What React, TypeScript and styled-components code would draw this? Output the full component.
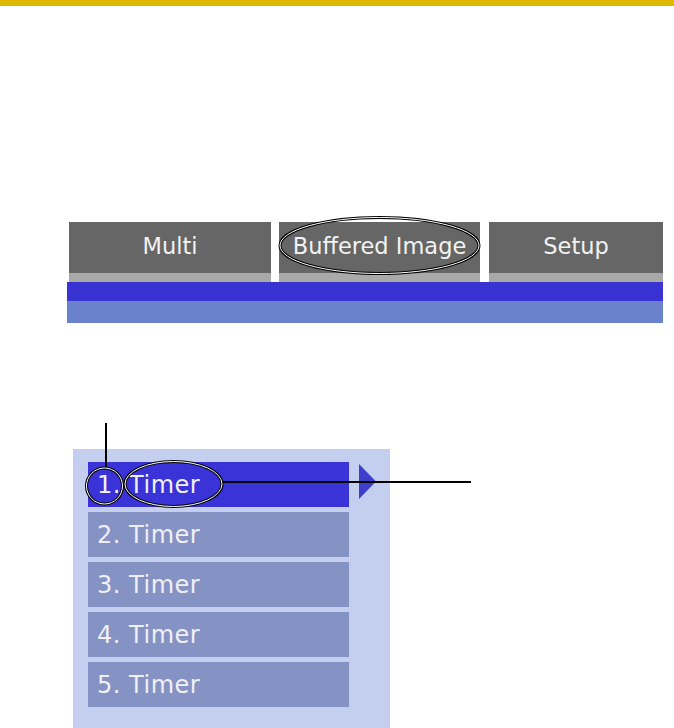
import React from 'react'
import styled, { createGlobalStyle } from 'styled-components'

const GlobalStyle = createGlobalStyle`
  html, body {
    margin: 0;
    padding: 0;
    background: #ffffff;
    font-family: "DejaVu Sans", Verdana, sans-serif;
  }
`

const tabs = [
  { label: 'Multi', width: 202, circled: false },
  { label: 'Buffered Image', width: 201, circled: true },
  { label: 'Setup', width: 174, circled: false },
]

const timers = [1, 2, 3, 4, 5]

const App: React.FC = () => {
  return (
    <Page>
      <GlobalStyle />
      <TopRule />
      <TabSection>
        <TabRow>
          {tabs.map((t) => (
            <Tab key={t.label} $width={t.width}>
              <TabLabel>{t.label}</TabLabel>
              {t.circled && (
                <Callout viewBox="0 0 201 60" width={201} height={60}>
                  <ellipse cx="100.5" cy="23.5" rx="99.5" ry="28" fill="none" stroke="#000" strokeWidth="3" />
                  <ellipse cx="100.5" cy="23.5" rx="99.5" ry="28" fill="none" stroke="#fff" strokeWidth="1" />
                </Callout>
              )}
            </Tab>
          ))}
        </TabRow>
        <BlueBar />
        <LightBar />
      </TabSection>

      <MenuSection>
        <Panel>
          {timers.map((n) => (
            <ItemRow key={n}>
              <Item $active={n === 1}>{n}. Timer</Item>
              {n === 1 && (
                <Arrow viewBox="0 0 17 35" width={17} height={35}>
                  <polygon points="0,0 17,17.5 0,35" fill="#3d3fcb" />
                </Arrow>
              )}
            </ItemRow>
          ))}
        </Panel>
        <Annotations viewBox="0 323 674 405" width={674} height={405}>
          <line x1="106" y1="423" x2="106" y2="469" stroke="#000" strokeWidth="2" />
          <line x1="222" y1="482" x2="471" y2="482" stroke="#000" strokeWidth="2" />
          <ellipse cx="104.5" cy="486" rx="18" ry="18" fill="none" stroke="#000" strokeWidth="3" />
          <ellipse cx="104.5" cy="486" rx="18" ry="18" fill="none" stroke="#fff" strokeWidth="1" />
          <ellipse cx="173.5" cy="484" rx="48.5" ry="22.5" fill="none" stroke="#000" strokeWidth="3" />
          <ellipse cx="173.5" cy="484" rx="48.5" ry="22.5" fill="none" stroke="#fff" strokeWidth="1" />
        </Annotations>
      </MenuSection>
    </Page>
  )
}

export default App

const Page = styled.div`
  width: 674px;
  height: 728px;
  overflow: hidden;
  background: #ffffff;
`

const TopRule = styled.div`
  height: 6px;
  background: #dfb600;
`

const TabSection = styled.div`
  margin: 216px 0 0 67px;
  width: 596px;
`

const TabRow = styled.div`
  display: flex;
  gap: 8px;
  padding-left: 2px;
`

const Tab = styled.div<{ $width: number }>`
  position: relative;
  width: ${(p) => p.$width}px;
  height: 51px;
  background: #666666;
  border-bottom: 9px solid #a9a9a9;
  display: flex;
  align-items: center;
  justify-content: center;
  &:last-child {
    margin-left: 1px;
  }
`

const TabLabel = styled.span`
  color: #f2f2f2;
  font-size: 22.5px;
  line-height: 1;
  margin-top: -3px;
`

const Callout = styled.svg`
  position: absolute;
  left: 0;
  top: 0;
  overflow: visible;
`

const BlueBar = styled.div`
  height: 19px;
  background: #3a33d3;
`

const LightBar = styled.div`
  height: 22px;
  background: #6a82cc;
`

const MenuSection = styled.div`
  position: relative;
  height: 405px;
  padding: 126px 0 0 73px;
  box-sizing: border-box;
`

const Panel = styled.div`
  width: 317px;
  height: 279px;
  box-sizing: border-box;
  background: #c4ceee;
  padding: 13px 0 0 15px;
  display: flex;
  flex-direction: column;
  gap: 5px;
`

const ItemRow = styled.div`
  display: flex;
  align-items: center;
  gap: 10px;
`

const Item = styled.div<{ $active: boolean }>`
  width: 261px;
  height: 45px;
  box-sizing: border-box;
  padding-left: 9px;
  display: flex;
  align-items: center;
  background: ${(p) => (p.$active ? '#3a33d8' : '#8592c4')};
  color: #f0f0f4;
  font-size: 24px;
  letter-spacing: 0.5px;
`

const Arrow = styled.svg`
  display: block;
  margin-top: -6px;
`

const Annotations = styled.svg`
  position: absolute;
  left: 0;
  top: 0;
  pointer-events: none;
`
